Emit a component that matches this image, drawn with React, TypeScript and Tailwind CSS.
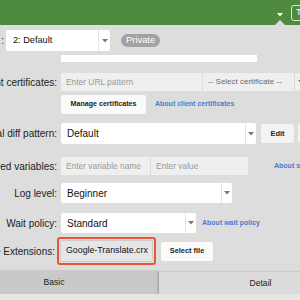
import React from "react";

const Arrow = () => (
  <svg width="6" height="4" viewBox="0 0 6 4" className="shrink-0">
    <path d="M0 0 L6 0 L3 3.5 Z" fill="#7a7a7a" />
  </svg>
);

const Select = ({ w, text, divider }: { w: string; text: string; divider?: boolean }) => (
  <div className={`${w} h-full bg-white flex items-stretch rounded-[2px] shrink-0`}>
    <div className="flex-1 flex items-center pl-[6px] text-[10px] text-[#111] whitespace-nowrap overflow-hidden">{text}</div>
    <div className="w-[11px] border-l border-[#e4e4e4] flex items-center justify-center shrink-0">
      <Arrow />
    </div>
  </div>
);

const Label = ({ text, w = "w-[57px]" }: { text: string; w?: string }) => (
  <div className={`${w} shrink-0 flex justify-end whitespace-nowrap text-[10px] text-[#222]`}>{text}</div>
);

export default function App() {
  return (
    <div className="w-[300px] h-[300px] overflow-hidden bg-[#dddddd] font-['Liberation_Sans',Arial,sans-serif] flex flex-col relative">
      {/* header */}
      <div className="h-[25px] shrink-0 bg-[#4e8b3e] flex items-center pl-[277px] relative">
        <svg width="6" height="4" viewBox="0 0 6 4" className="shrink-0 mt-[4px]">
          <path d="M0 0 L6 0 L3 3.5 Z" fill="#ffffff" />
        </svg>
        <div className="ml-[8px] h-[16px] w-[30px] shrink-0 border border-white/80 rounded-[3px] flex items-center pl-[4px] text-[9px] text-white whitespace-nowrap">
          Tools
        </div>
        <svg width="10" height="5" viewBox="0 0 10 5" className="absolute left-[275px] bottom-0">
          <path d="M0 5 L5 0 L10 5 Z" fill="#dddddd" />
        </svg>
      </div>

      {/* row 1 */}
      <div className="mt-[5px] h-[21px] flex items-center shrink-0">
        <div className="w-[6px] shrink-0 flex justify-end pr-[2px] text-[10px] text-[#222]">:</div>
        <div className="h-full w-[104px] bg-white flex items-stretch shrink-0 rounded-[2px]">
          <div className="flex-1 flex items-center pl-[7px] text-[9.2px] text-[#111] whitespace-nowrap">2: Default</div>
          <div className="w-[12px] border-l border-[#e6e6e6] flex items-center justify-center">
            <Arrow />
          </div>
        </div>
        <div className="ml-[11px] h-[13px] px-[5px] rounded-full bg-[#a2a2a2] text-white text-[9.4px] flex items-center">Private</div>
      </div>

      {/* partial white */}
      <div className="mt-[4px] h-[7px] flex shrink-0">
        <div className="w-[61px] shrink-0" />
        <div className="w-[196px] bg-white" />
      </div>

      {/* certificates */}
      <div className="mt-[11px] h-[18px] flex items-center shrink-0">
        <Label text="Client certificates:" />
        <div className="ml-[4px] h-full w-[141px] bg-[#efefef] flex items-center pl-[5px] text-[8.4px] text-[#9a9a9a] whitespace-nowrap shrink-0">
          Enter URL pattern
        </div>
        <div className="ml-[1px] h-full w-[91px] bg-[#efefef] flex items-center pl-[5px] text-[8px] text-[#6a6a6a] whitespace-nowrap shrink-0">
          -- Select certificate --
        </div>
        <div className="h-full w-[12px] bg-[#efefef] border-l border-[#dadada] flex items-center justify-center shrink-0">
          <Arrow />
        </div>
      </div>

      {/* manage certificates */}
      <div className="mt-[4px] h-[19px] flex items-center shrink-0">
        <div className="w-[61px] shrink-0" />
        <div className="h-full w-[85px] bg-[#fafafa] rounded-[2px] flex items-center justify-center text-[7.1px] font-bold text-[#222] whitespace-nowrap shrink-0">
          Manage certificates
        </div>
        <div className="ml-[9px] text-[7px] font-bold text-[#4a7bd0] whitespace-nowrap">About client certificates</div>
      </div>

      {/* diff pattern */}
      <div className="mt-[9px] h-[21px] flex items-center shrink-0">
        <Label text="Visual diff pattern:" />
        <div className="ml-[4px] h-full flex shrink-0">
          <Select w="w-[195px]" text="Default" />
        </div>
        <div className="ml-[5px] h-[19px] w-[33px] bg-[#f3f3f3] rounded-[2px] flex items-center justify-center text-[7.4px] font-bold text-[#222] shrink-0">
          Edit
        </div>
        <div className="ml-[4px] h-[19px] w-[33px] bg-[#f3f3f3] rounded-[2px] flex items-center justify-center text-[7.4px] font-bold text-[#222] shrink-0">
          New
        </div>
      </div>

      {/* variables */}
      <div className="mt-[13px] h-[18px] flex items-center shrink-0">
        <Label text="Stored variables:" />
        <div className="ml-[4px] h-full w-[89px] bg-[#efefef] flex items-center pl-[5px] text-[8.4px] text-[#9a9a9a] whitespace-nowrap shrink-0">
          Enter variable name
        </div>
        <div className="ml-[1px] h-full w-[97px] bg-[#efefef] flex items-center pl-[5px] text-[8.4px] text-[#9a9a9a] whitespace-nowrap shrink-0">
          Enter value
        </div>
        <div className="ml-[26px] text-[7px] font-bold text-[#4a7bd0] whitespace-nowrap">About stored variables</div>
      </div>

      {/* log level */}
      <div className="mt-[8px] h-[20px] flex items-center shrink-0">
        <Label text="Log level:" />
        <div className="ml-[4px] h-full flex shrink-0">
          <Select w="w-[171px]" text="Beginner" />
        </div>
      </div>

      {/* wait policy */}
      <div className="mt-[10px] h-[20px] flex items-center shrink-0">
        <Label text="Wait policy:" />
        <div className="ml-[4px] h-full flex shrink-0">
          <Select w="w-[135px]" text="Standard" />
        </div>
        <div className="ml-[6px] text-[7px] font-bold text-[#4a7bd0] whitespace-nowrap">About wait policy</div>
      </div>

      {/* extensions */}
      <div className="mt-[4px] h-[28px] flex items-center shrink-0">
        <Label text="Chrome Extensions:" w="w-[55px]" />
        <div className="ml-[2px] h-full w-[99px] border-2 border-[#e8553b] rounded-[3px] p-px shrink-0">
          <div className="h-full w-full bg-[#e6e6e6] border border-[#cccccc] rounded-[2px] flex items-center pl-[5px] text-[8.8px] text-[#111] whitespace-nowrap">
            Google-Translate.crx
          </div>
        </div>
        <div className="ml-[5px] h-[19px] w-[52px] bg-[#fafafa] rounded-[2px] flex items-center justify-center text-[7.4px] font-bold text-[#222] whitespace-nowrap shrink-0">
          Select file
        </div>
      </div>

      {/* tabs */}
      <div className="mt-[5px] h-[24px] flex items-end shrink-0 ml-[-51px]">
        <div className="w-[210px] h-[24px] bg-[#c9c9c9] flex items-center justify-center text-[8.6px] text-[#222] shrink-0">Basic</div>
        <div className="w-[203px] h-[22px] bg-[#dcdcdc] shadow-[-1px_0_2px_rgba(0,0,0,0.25)] flex items-center justify-center text-[8.6px] text-[#222] shrink-0">Detail</div>
      </div>
      <div className="flex-1 bg-[#e6e6e6]" />
    </div>
  );
}
